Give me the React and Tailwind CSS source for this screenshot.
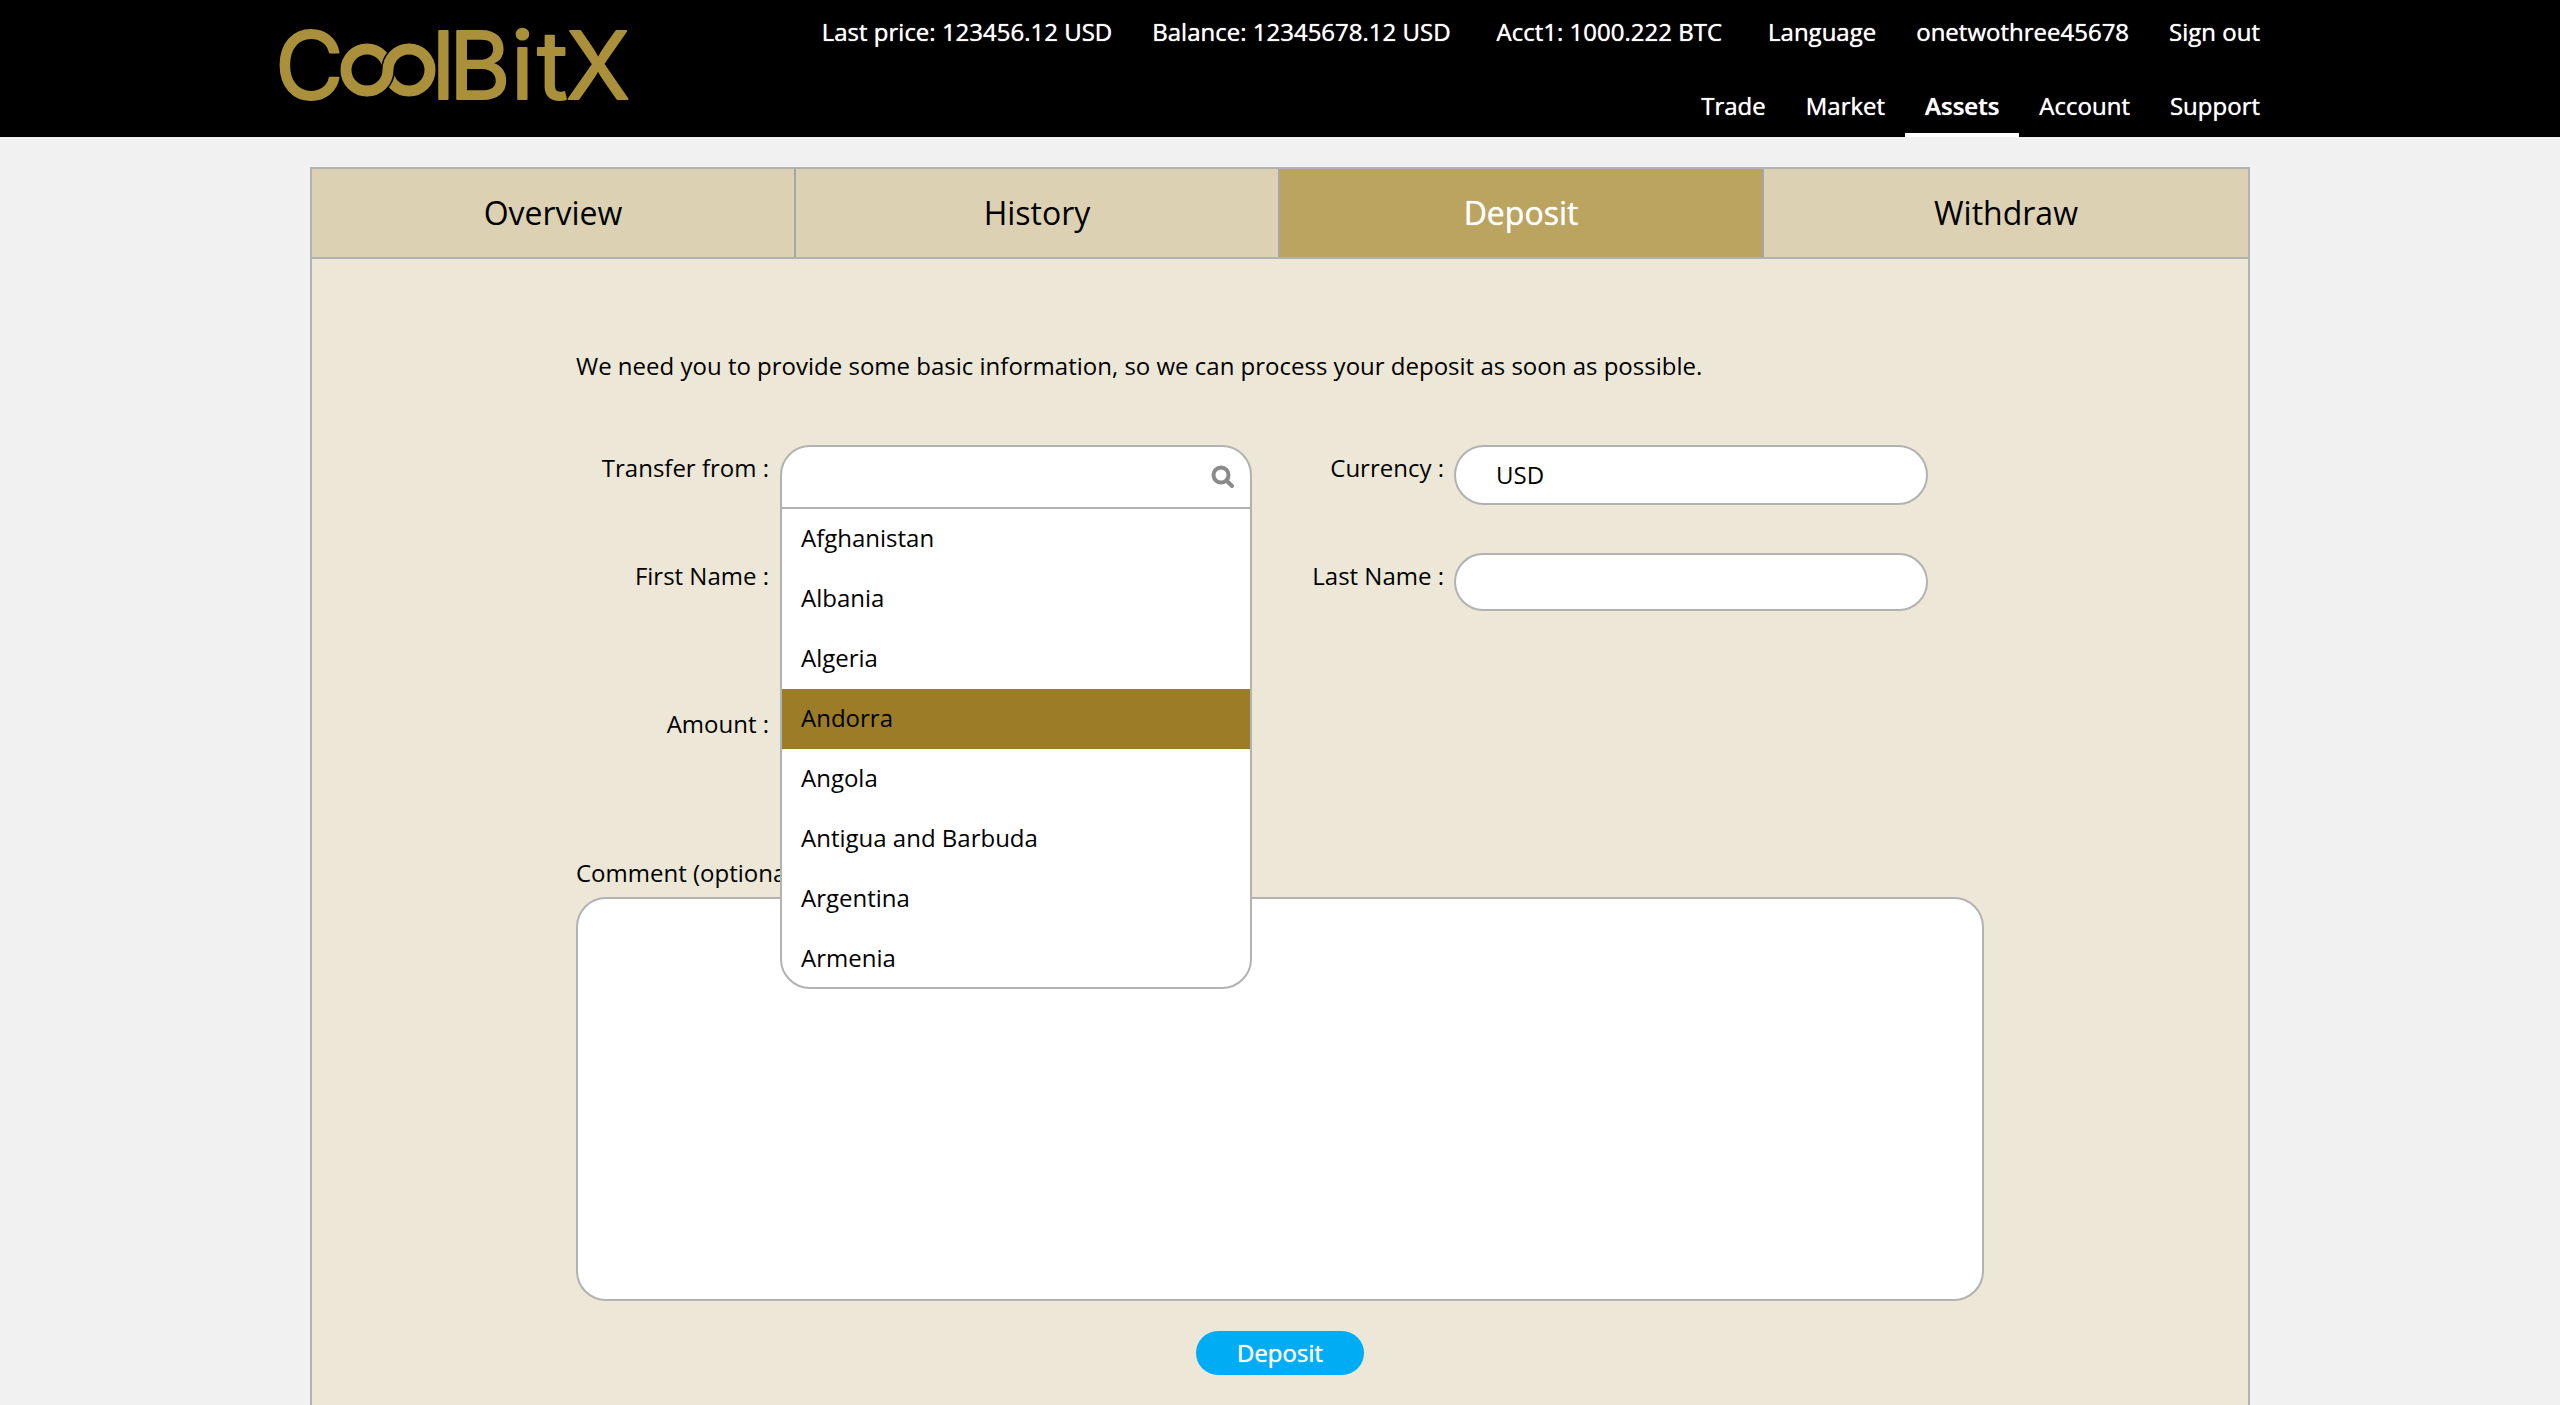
import { useState } from 'react'

const countries = [
  'Afghanistan',
  'Albania',
  'Algeria',
  'Andorra',
  'Angola',
  'Antigua and Barbuda',
  'Argentina',
  'Armenia',
]

function Logo() {
  return (
    <a href="#home" aria-label="CoolBitX" className="-ml-2 mt-1 block shrink-0">
      <svg
        viewBox="-8 -24 380 128"
        className="h-[128px] w-[380px]"
        fill="#aa903a"
        stroke="#aa903a"
        fontFamily="Inter, sans-serif"
        fontSize="94"
      >
        <text x="-5 152 169 231 257 286" y="71" strokeWidth="2" strokeLinejoin="round">ClBitX</text>
        <g fill="none" strokeWidth="11">
          <path d="M108 42 A21 21 0 1 0 87 63" />
          <path d="M108 42 A21 21 0 1 0 129 21" />
          <path d="M87 63 A21 21 0 0 0 108 42 A21 21 0 0 1 129 21" stroke="#000" strokeWidth="14" />
          <path d="M86 63 L87 63 A21 21 0 0 0 108 42 A21 21 0 0 1 129 21 L130 21" />
        </g>
      </svg>
    </a>
  )
}

function TopBar() {
  return (
    <header className="bg-black text-white">
      <div className="mx-auto flex max-w-[2000px] justify-between">
        <Logo />
        <div className="flex flex-col items-end text-shadow-[0_0_1px_#fff]">
          <div className="flex h-16 items-center leading-8">
            <span className="px-5">Last price: 123456.12 USD</span>
            <span className="px-5">Balance: 12345678.12 USD</span>
            <span className="px-[26px]">Acct1: 1000.222 BTC</span>
            <a href="#language" className="px-5">Language</a>
            <a href="#user" className="px-5">onetwothree45678</a>
            <a href="#signout" className="px-5">Sign out</a>
          </div>
          <nav className="flex leading-8">
            {['Trade', 'Market', 'Assets', 'Account', 'Support'].map((item) => (
              <a
                key={item}
                href={'#' + item.toLowerCase()}
                className={
                  item === 'Assets'
                    ? 'h-[73px] border-b-4 border-white px-5 pt-[26px] font-semibold'
                    : 'h-[73px] px-5 pt-[26px]'
                }
              >
                {item}
              </a>
            ))}
          </nav>
        </div>
      </div>
    </header>
  )
}

function Tabs() {
  return (
    <nav className="grid grid-cols-4 border-b-2 border-[#b2b2b2] text-center text-[32px] leading-[88px]">
      <a href="#overview" className="border-r-2 border-[#a6a6a6] bg-[#dcd1b2]">Overview</a>
      <a href="#history" className="border-r-2 border-[#a6a6a6] bg-[#dcd1b2]">History</a>
      <a href="#deposit" className="border-r-2 border-[#a6a6a6] bg-[#baa45f] text-white text-shadow-[0_0_1px_#fff]">Deposit</a>
      <a href="#withdraw" className="bg-[#dcd1b2]">Withdraw</a>
    </nav>
  )
}

function SearchIcon() {
  return (
    <svg viewBox="0 0 24 24" className="h-6 w-6" fill="none" stroke="#8a8a8a" strokeLinecap="round">
      <circle cx="10" cy="10" r="7.500" strokeWidth="4" />
      <path d="M16 16 L21 21" strokeWidth="4" />
    </svg>
  )
}

function CountryPicker() {
  const [picked, setPicked] = useState('Andorra')
  return (
    <div className="absolute inset-x-0 top-0 z-10 overflow-hidden rounded-[30px] border-2 border-[#b2b2b2] bg-white">
      <div className="flex h-[62px] items-center border-b-2 border-[#b2b2b2] pr-[15px]">
        <input id="from" type="text" className="h-full min-w-0 flex-1 px-5 outline-none" />
        <SearchIcon />
      </div>
      <ul className="h-[478px] overflow-hidden">
        {countries.map((name) => (
          <li key={name}>
            <button
              type="button"
              onClick={() => setPicked(name)}
              className={
                name === picked
                  ? 'block h-[60px] w-full bg-[#9a7d26] px-[19px] pb-0.5 text-left'
                  : 'block h-[60px] w-full px-[19px] pb-0.5 text-left'
              }
            >
              {name}
            </button>
          </li>
        ))}
      </ul>
    </div>
  )
}

const field = 'w-full rounded-[30px] border-2 border-[#b2b2b2] bg-white px-10 outline-none'

export default function App() {
  return (
    <div className="flex min-h-screen flex-col bg-[#f1f1f1] font-['Open_Sans',sans-serif] text-[24px] leading-8 text-black">
      <TopBar />
      <main className="mx-auto mt-[30px] w-full max-w-[1940px] flex-1 border-x-2 border-t-2 border-[#b2b2b2] bg-[#ece7d6]">
        <Tabs />
        <form className="mx-auto max-w-[1408px] pt-[91px]" onSubmit={(e) => e.preventDefault()}>
          <p>We need you to provide some basic information, so we can process your deposit as soon as possible.</p>
          <div className="mt-[63px] grid grid-cols-[194px_472px_182px_474px] gap-x-2.5 text-right">
            <label htmlFor="from" className="pt-[7px] pr-px">Transfer from :</label>
            <div className="relative h-[108px] text-left">
              <CountryPicker />
            </div>
            <label htmlFor="currency" className="pt-[7px]">Currency :</label>
            <div>
              <select id="currency" className={field + ' h-[60px] appearance-none'}>
                <option>USD</option>
              </select>
            </div>
            <label htmlFor="first" className="pt-[7px] pr-px">First Name :</label>
            <div className="h-[148px]">
              <input id="first" type="text" className={field + ' h-[58px]'} />
            </div>
            <label htmlFor="last" className="pt-[7px]">Last Name :</label>
            <div>
              <input id="last" type="text" className={field + ' h-[58px]'} />
            </div>
            <label htmlFor="amount" className="pt-[7px] pr-px">Amount :</label>
            <div className="h-[148px]">
              <input id="amount" type="text" className={field + ' h-[58px]'} />
            </div>
          </div>
          <label htmlFor="comment" className="mt-2 block">Comment (optional) :</label>
          <textarea id="comment" className="mt-2 block h-[404px] w-full resize-none rounded-[30px] border-2 border-[#b2b2b2] bg-white p-5 outline-none" />
          <button type="submit" className="mx-auto mt-[30px] block h-11 w-[168px] rounded-full bg-[#00adf5] text-white text-shadow-[0_0_1px_#fff]">
            Deposit
          </button>
        </form>
      </main>
    </div>
  )
}
